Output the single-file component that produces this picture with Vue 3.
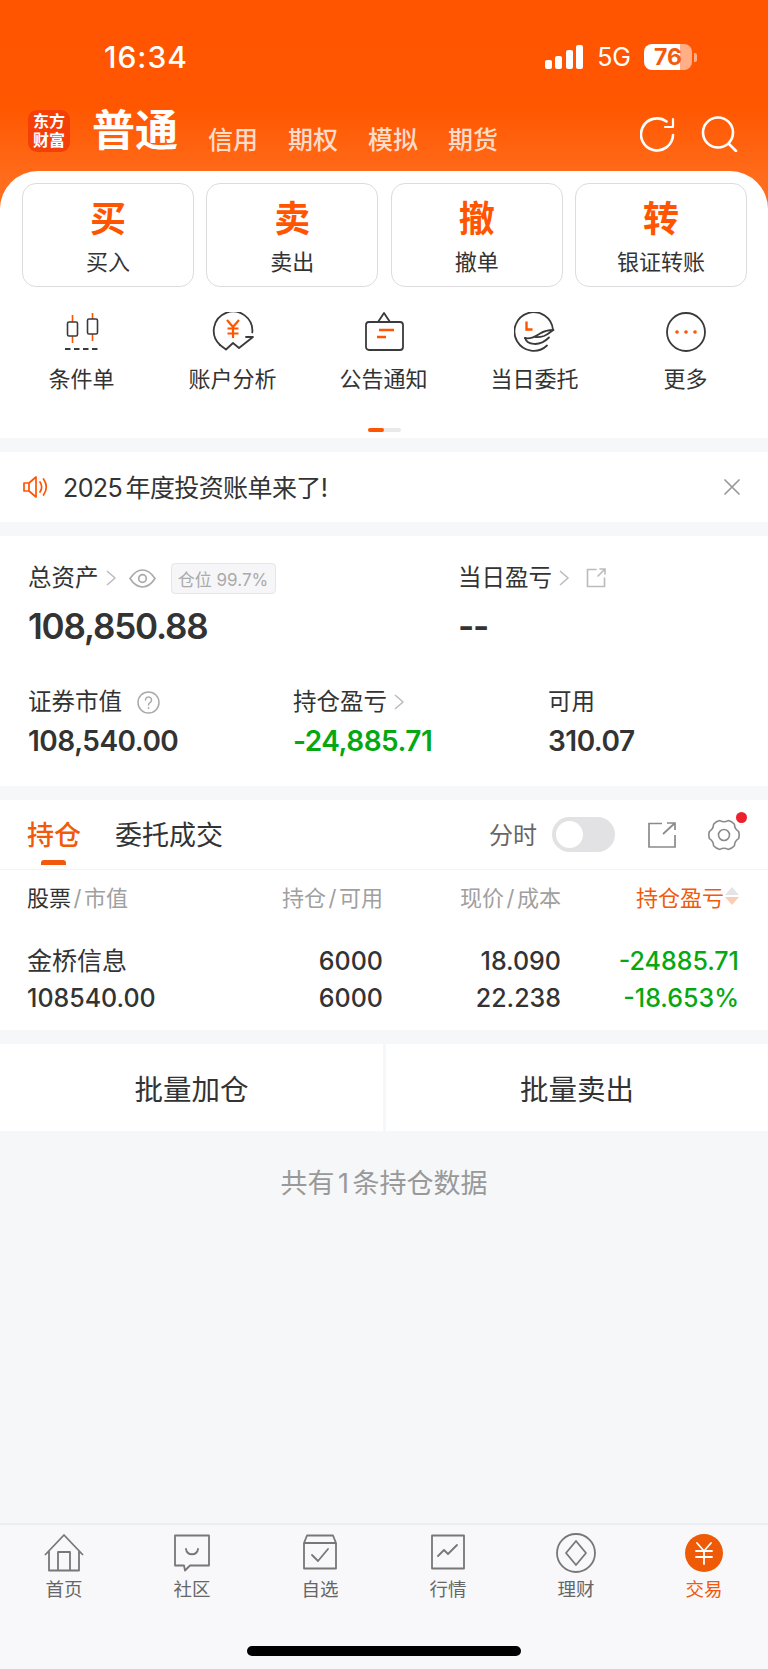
<template>
  <div class="page">
    <header class="head">
      <div class="status">
        <span class="time">16:34</span>
        <div class="status-right">
          <div class="signal"><i></i><i></i><i></i><i></i></div>
          <span class="net">5G</span>
          <div class="battery"><span class="battery-num">76</span></div>
          <i class="battery-tip"></i>
        </div>
      </div>
      <div class="nav">
        <div class="logo">东方<br />财富</div>
        <span class="nav-main">普通</span>
        <div class="nav-tabs">
          <span v-for="t in navTabs" :key="t">{{ t }}</span>
        </div>
        <div class="nav-icons">
          <svg width="36" height="36" viewBox="0 0 36 36" fill="none" stroke="#fff" stroke-width="2.6" stroke-linecap="round" stroke-linejoin="round">
            <path d="M33 19a16 16 0 1 1-6.5-13.5" />
            <path d="M33 3v8h-8" stroke-width="2.2" />
          </svg>
          <svg width="37" height="36" viewBox="0 0 37 36" fill="none" stroke="#fff" stroke-width="2.6" stroke-linecap="round">
            <circle cx="17" cy="16.5" r="15" />
            <path d="M28 28l7 7" />
          </svg>
        </div>
      </div>
    </header>

    <section class="card quick">
      <div class="trade-row">
        <div v-for="b in tradeBtns" :key="b.big" class="trade-btn">
          <span class="trade-big">{{ b.big }}</span>
          <span class="trade-sub">{{ b.sub }}</span>
        </div>
      </div>
      <div class="tool-row">
        <div class="tool">
          <svg width="40" height="40" viewBox="0 0 40 40" fill="none" stroke-width="1.6">
            <path d="M10.500 3v7M10.500 24v7M30.500 1v6M30.500 22v7" stroke="#ff5500" />
            <rect x="5.500" y="10" width="10" height="14" rx="1.500" stroke="#3a3a3a" />
            <rect x="25.500" y="7" width="10" height="15" rx="1.500" stroke="#3a3a3a" />
            <path d="M3 37h36" stroke="#3a3a3a" stroke-width="1.800" stroke-dasharray="5.500 3.500" />
          </svg>
          <span>条件单</span>
        </div>
        <div class="tool">
          <svg width="42" height="40" viewBox="0 0 42 40" fill="none" stroke="#3a3a3a" stroke-width="1.800" stroke-linejoin="round" stroke-linecap="round">
            <path d="M8 33A19.300 19.300 0 1 1 40.300 20.500" />
            <path d="M8 33l6 4.500 7-6.500 6 5 14-11h-7" />
            <path d="M15 8l6 7 6-7M21 15v11M15.500 16.500h11M15.500 21.500h11" stroke="#ff5500" stroke-width="2.200" stroke-linecap="butt" />
          </svg>
          <span>账户分析</span>
        </div>
        <div class="tool">
          <svg width="40" height="40" viewBox="0 0 40 40" fill="none" stroke="#3a3a3a" stroke-width="1.800" stroke-linejoin="round">
            <path d="M14 10l6-9 6 9" />
            <rect x="2" y="10" width="37" height="28" rx="3" />
            <path d="M15 18h15M13 25h9" stroke="#ff5500" stroke-width="2.400" />
          </svg>
          <span>公告通知</span>
        </div>
        <div class="tool">
          <svg width="42" height="40" viewBox="0 0 42 40" fill="none" stroke="#3a3a3a" stroke-width="1.800" stroke-linecap="round" stroke-linejoin="round">
            <path d="M39 18A19.300 19.300 0 1 0 33 33.500" />
            <path d="M12.500 9.500v8h6" stroke="#ff5500" stroke-width="2.400" stroke-linecap="butt" stroke-linejoin="miter" />
            <path d="M11 26c7 1.500 11-2 15-4.500 4-2.500 9-3.500 13.500-3.500-3.500 2-5.500 4.500-9.500 6-3 1-6 1.500-9 1" />
            <path d="M11 26c2 6.500 14 9.500 24-.5" />
          </svg>
          <span>当日委托</span>
        </div>
        <div class="tool">
          <svg width="40" height="40" viewBox="0 0 40 40" fill="none" stroke="#3a3a3a" stroke-width="1.800">
            <circle cx="20" cy="20" r="19" />
            <circle cx="11" cy="20" r="1.800" fill="#ff5500" stroke="none" />
            <circle cx="20" cy="20" r="1.800" fill="#ff5500" stroke="none" />
            <circle cx="29" cy="20" r="1.800" fill="#ff5500" stroke="none" />
          </svg>
          <span>更多</span>
        </div>
      </div>
      <div class="pager"><i></i></div>
    </section>

    <section class="card notice">
      <svg width="25" height="22" viewBox="0 0 25 22" fill="none" stroke="#ff5500" stroke-width="1.700" stroke-linejoin="round">
        <path d="M1 7h5l7-6v20l-7-6H1zM6 7v8" />
        <path d="M17 6c2 3 2 7 0 10M20.500 3c3.500 5 3.500 11 0 16" stroke-linecap="round" />
      </svg>
      <span class="notice-text">2025 年度投资账单来了!</span>
      <svg width="16" height="16" viewBox="0 0 16 16" stroke="#999" stroke-width="1.700" stroke-linecap="round">
        <path d="M1 1l14 14M15 1L1 15" />
      </svg>
    </section>

    <section class="card assets">
      <div class="assets-top">
        <div>
          <div class="label-line">
            <span class="label">总资产</span>
            <svg class="chevron" width="11" height="16" viewBox="0 0 11 16" fill="none" stroke="#bbb" stroke-width="1.500"><path d="M1 1l8 7-8 7" /></svg>
            <svg class="eye" width="27" height="19" viewBox="0 0 27 19" fill="none" stroke="#aaa" stroke-width="1.700">
              <path d="M1 9.500C5 3.500 9 1 13.500 1S22 3.500 26 9.500C22 15.500 18 18 13.500 18S5 15.500 1 9.500z" />
              <circle cx="13.500" cy="9.500" r="3.800" />
            </svg>
            <span class="tag">仓位 99.7%</span>
          </div>
          <div class="value-big">108,850.88</div>
        </div>
        <div>
          <div class="label-line">
            <span class="label">当日盈亏</span>
            <svg class="chevron" width="11" height="16" viewBox="0 0 11 16" fill="none" stroke="#bbb" stroke-width="1.500"><path d="M1 1l8 7-8 7" /></svg>
            <svg class="share-small" width="20" height="20" viewBox="0 0 20 20" fill="none" stroke="#bbb" stroke-width="1.600" stroke-linecap="round">
              <path d="M10 1.500H1.500v17h17V10M12 8l7-7M14 1h5v5" />
            </svg>
          </div>
          <div class="value-big">--</div>
        </div>
      </div>
      <div class="assets-bottom">
        <div>
          <div class="label-line">
            <span class="label">证券市值</span>
            <svg class="help" width="23" height="23" viewBox="0 0 23 23" fill="none" stroke="#aaa" stroke-width="1.500">
              <circle cx="11.500" cy="11.500" r="10.500" />
              <path d="M8.500 9a3 3 0 1 1 4.500 2.600c-1 .6-1.500 1.200-1.500 2.400" stroke-linecap="round" />
              <circle cx="11.500" cy="17" r=".9" fill="#aaa" stroke="none" />
            </svg>
          </div>
          <div class="value">108,540.00</div>
        </div>
        <div>
          <div class="label-line">
            <span class="label">持仓盈亏</span>
            <svg class="chevron" width="11" height="16" viewBox="0 0 11 16" fill="none" stroke="#bbb" stroke-width="1.500"><path d="M1 1l8 7-8 7" /></svg>
          </div>
          <div class="value green">-24,885.71</div>
        </div>
        <div>
          <div class="label-line"><span class="label">可用</span></div>
          <div class="value">310.07</div>
        </div>
      </div>
    </section>

    <section class="card holdings">
      <div class="tabs">
        <span class="tab active">持仓</span>
        <span class="tab">委托成交</span>
        <span class="tab-spacer"></span>
        <span class="tab-switch-label">分时</span>
        <div class="toggle"><i></i></div>
        <svg class="tab-share" width="28" height="26" viewBox="0 0 28 26" fill="none" stroke="#8a8a8a" stroke-width="1.700">
          <path d="M14 1.500H1v23.500h26V13M15 12L27 1M19 1h8v7" />
        </svg>
        <div class="gear">
          <svg width="32" height="32" viewBox="0 0 32 32" fill="none" stroke="#8a8a8a" stroke-width="1.600" stroke-linejoin="round">
            <path :d="gearPath" />
            <circle cx="16" cy="16" r="5.500" />
          </svg>
          <i class="dot"></i>
        </div>
      </div>
      <div class="table-head">
        <span><b>股票</b><em>/</em>市值</span>
        <span class="right">持仓<em>/</em>可用</span>
        <span class="right">现价<em>/</em>成本</span>
        <span class="right sort">持仓盈亏<i class="sort-icon"></i></span>
      </div>
      <div class="table-row">
        <span class="stock-name">金桥信息</span>
        <span class="right">6000</span>
        <span class="right">18.090</span>
        <span class="right green">-24885.71</span>
        <span>108540.00</span>
        <span class="right">6000</span>
        <span class="right">22.238</span>
        <span class="right green">-18.653%</span>
      </div>
    </section>

    <div class="batch">
      <button class="batch-btn">批量加仓</button>
      <button class="batch-btn">批量卖出</button>
    </div>

    <p class="count">共有 1 条持仓数据</p>

    <footer class="tabbar">
      <div class="bar-items">
        <div class="bar-item">
          <svg width="40" height="38" viewBox="0 0 40 38" fill="none" stroke="#777" stroke-width="1.800" stroke-linejoin="round">
            <path d="M1 21L20 1l19 20M5 17v19.500h30V17" />
            <path d="M14 36.500V18h12v18.500" />
          </svg>
          <span>首页</span>
        </div>
        <div class="bar-item">
          <svg width="36" height="38" viewBox="0 0 36 38" fill="none" stroke="#777" stroke-width="1.800" stroke-linejoin="round">
            <path d="M1 1.500h34v30H16l-5 5-1-5H1z" />
            <path d="M12 15c1 7 11 7 12 0" stroke-linecap="round" />
          </svg>
          <span>社区</span>
        </div>
        <div class="bar-item">
          <svg width="36" height="38" viewBox="0 0 36 38" fill="none" stroke="#777" stroke-width="1.800" stroke-linejoin="round">
            <path d="M2 9L5 1.500h26L34 9v25.500H2zM2 9h32" />
            <path d="M10 21l6 6 10-12" stroke-linecap="round" />
          </svg>
          <span>自选</span>
        </div>
        <div class="bar-item">
          <svg width="34" height="38" viewBox="0 0 34 38" fill="none" stroke="#777" stroke-width="1.800" stroke-linejoin="round">
            <rect x="1" y="1.500" width="32" height="33" />
            <path d="M7 22l6-6 4 4 9-9" stroke-linecap="round" />
          </svg>
          <span>行情</span>
        </div>
        <div class="bar-item">
          <svg width="40" height="40" viewBox="0 0 40 40" fill="none" stroke="#777" stroke-width="1.800" stroke-linejoin="round">
            <circle cx="20" cy="20" r="19" />
            <path d="M20 8l10 12-10 12-10-12z" />
          </svg>
          <span>理财</span>
        </div>
        <div class="bar-item on">
          <svg width="38" height="38" viewBox="0 0 38 38" fill="none" stroke="#fff" stroke-width="1.800" stroke-linecap="round">
            <circle cx="19" cy="19" r="19" fill="#ee5a05" stroke="none" />
            <path d="M12 9l7 8 7-8M19 17v13M11 17h16M11 23h16" />
          </svg>
          <span>交易</span>
        </div>
      </div>
      <div class="home-line"></div>
    </footer>
  </div>
</template>

<script setup>
const navTabs = ['信用', '期权', '模拟', '期货']

const tradeBtns = [
  { big: '买', sub: '买入' },
  { big: '卖', sub: '卖出' },
  { big: '撤', sub: '撤单' },
  { big: '转', sub: '银证转账' },
]

// six rounded teeth round the centre of a 32 box
const point = (r, deg) => {
  const a = (deg * Math.PI) / 180
  return `${(16 + r * Math.cos(a)).toFixed(2)} ${(16 + r * Math.sin(a)).toFixed(2)}`
}
let d = `M${point(15, -14)}`
for (let k = 0; k < 6; k++) {
  const c = k * 60
  d += ` Q${point(15.8, c)} ${point(15, c + 14)}`
  d += ` Q${point(12.2, c + 30)} ${point(15, c + 46)}`
}
const gearPath = d + 'Z'
</script>

<style>
body {
  margin: 0;
  background: #f6f7f9;
}
</style>

<style scoped>
.page {
  width: 768px;
  height: 1669px;
  display: flex;
  flex-direction: column;
  overflow: hidden;
  background: #f6f7f9;
  color: #333;
  font-family: Inter, "Noto Sans CJK SC", sans-serif;
}

.head {
  height: 210px;
  box-sizing: border-box;
  padding-top: 40px;
  background: linear-gradient(180deg, #ff5500 0%, #ff5600 50%, #ff6c1b 85%, #ff6c1b 100%);
  color: #fff;
}

.status {
  height: 34px;
  display: flex;
  align-items: center;
  justify-content: space-between;
  padding: 0 71px 0 104px;
}

.time {
  font-size: 30px;
  font-weight: 500;
  letter-spacing: 1px;
}

.status-right {
  display: flex;
  align-items: center;
}

.signal {
  display: flex;
  align-items: flex-end;
  gap: 3.500px;
  height: 24px;
  margin-right: 14px;
}

.signal i {
  width: 7px;
  background: #fff;
  border-radius: 2px;
}

.signal i:nth-child(1) { height: 9px; }
.signal i:nth-child(2) { height: 13px; }
.signal i:nth-child(3) { height: 19px; }
.signal i:nth-child(4) { height: 24px; }

.net {
  font-size: 25px;
  font-weight: 400;
  margin-right: 13px;
}

.battery {
  width: 48px;
  height: 26px;
  border-radius: 8px;
  background: linear-gradient(90deg, #fff 0, #fff 76%, #ffae85 76%, #ffae85 100%);
  display: flex;
  align-items: center;
  justify-content: center;
}

.battery-num {
  font-size: 23px;
  font-weight: 700;
  color: #f25a10;
}

.battery-tip {
  width: 3px;
  height: 9px;
  margin-left: 2px;
  border-radius: 0 2px 2px 0;
  background: #ffae85;
}

.nav {
  display: flex;
  align-items: flex-end;
  height: 42px;
  margin-top: 36px;
  padding: 0 30px 0 28px;
}

.logo {
  width: 42px;
  height: 42px;
  border-radius: 9px;
  background: #f53f08;
  text-align: center;
  padding-top: 1.500px;
  box-sizing: border-box;
  font-size: 16px;
  font-weight: 700;
  line-height: 19.500px;
}

.nav-main {
  margin-left: 22px;
  font-size: 43px;
  font-weight: 700;
  line-height: 44px;
}

.nav-tabs {
  display: flex;
  gap: 30px;
  margin-left: 30px;
  color: rgba(255, 255, 255, 0.78);
  font-size: 25px;
  font-weight: 500;
  line-height: 30px;
  margin-bottom: -3px;
}

.nav-icons {
  margin-left: auto;
  display: flex;
  gap: 25px;
}

.card {
  background: #fff;
}

.quick {
  height: 267px;
  margin-top: -39px;
  border-radius: 38px 38px 0 0;
  box-sizing: border-box;
  padding-top: 12px;
  position: relative;
}

.trade-row {
  display: grid;
  grid-template-columns: repeat(4, 172px);
  justify-content: space-between;
  padding: 0 21px 0 22px;
}

.trade-btn {
  height: 104px;
  box-sizing: border-box;
  border: 1.500px solid #dcdcdc;
  border-radius: 14px;
  display: flex;
  flex-direction: column;
  align-items: center;
}

.trade-big {
  margin-top: 13px;
  color: #ff5500;
  font-size: 36px;
  font-weight: 700;
  line-height: 44px;
}

.trade-sub {
  margin-top: 8px;
  font-size: 22px;
  line-height: 26px;
}

.tool-row {
  display: grid;
  grid-template-columns: repeat(5, 151px);
  padding: 25px 6px 0 6px;
}

.tool {
  display: flex;
  flex-direction: column;
  align-items: center;
  font-size: 22px;
  line-height: 28px;
}

.tool span {
  margin-top: 13px;
}

.pager {
  position: absolute;
  left: 368px;
  top: 257px;
  width: 33px;
  height: 4px;
  border-radius: 2px;
  background: #e9e9e9;
}

.pager i {
  display: block;
  width: 16px;
  height: 4px;
  border-radius: 2px;
  background: #ff5500;
}

.notice {
  height: 70px;
  margin-top: 14px;
  display: flex;
  align-items: center;
  padding: 0 28px 0 23px;
}

.notice-text {
  margin-left: 15px;
  margin-top: -2px;
  flex: 1;
  font-size: 25px;
  letter-spacing: -0.6px;
  word-spacing: -3px;
}

.assets {
  height: 250px;
  margin-top: 14px;
  box-sizing: border-box;
  padding: 26px 0 0 28px;
}

.assets-top {
  display: grid;
  grid-template-columns: 430px 1fr;
}

.assets-bottom {
  display: grid;
  grid-template-columns: 265px 255px 1fr;
  margin-top: 39px;
}

.label-line {
  display: flex;
  align-items: center;
  height: 32px;
}

.label {
  font-size: 23.500px;
  line-height: 32px;
}

.chevron {
  margin-left: 7px;
}

.eye {
  margin-left: 12px;
}

.tag {
  margin-left: 15px;
  height: 31px;
  width: 105px;
  box-sizing: border-box;
  display: flex;
  align-items: center;
  justify-content: center;
  white-space: nowrap;
  border: 1px solid #e6e6e8;
  border-radius: 4px;
  background: #f6f6f8;
  color: #aaa;
  font-size: 17px;
}

.share-small {
  margin-left: 16px;
}

.help {
  margin-left: 15px;
}

.value-big {
  margin-top: 11px;
  font-size: 35px;
  font-weight: 600;
  letter-spacing: -1.200px;
  line-height: 42px;
}

.value {
  margin-top: 6px;
  font-size: 28px;
  font-weight: 600;
  letter-spacing: -0.5px;
  line-height: 34px;
}

.green {
  color: #06a812;
}

.holdings {
  height: 230px;
  margin-top: 14px;
}

.tabs {
  height: 70px;
  box-sizing: border-box;
  border-bottom: 1px solid #f3f3f3;
  display: flex;
  align-items: center;
  padding: 0 28px 0 27px;
  font-size: 27px;
}

.tab {
  position: relative;
  margin-top: -2px;
  margin-right: 34px;
  font-weight: 400;
}

.tab.active {
  color: #f05a0a;
  font-weight: 500;
}

.tab.active::after {
  content: "";
  position: absolute;
  left: 14px;
  bottom: -12px;
  width: 25px;
  height: 5px;
  border-radius: 3px 3px 0 0;
  background: #f05a0a;
}

.tab-spacer {
  flex: 1;
}

.tab-switch-label {
  color: #666;
  font-size: 24px;
  margin-top: -2px;
}

.toggle {
  width: 63px;
  height: 35px;
  margin-left: 15px;
  border-radius: 18px;
  background: #e2e2e4;
  display: flex;
  align-items: center;
  padding-left: 4px;
  box-sizing: border-box;
}

.toggle i {
  width: 27px;
  height: 27px;
  border-radius: 50%;
  background: #fff;
}

.tab-share {
  margin-left: 33px;
}

.gear {
  position: relative;
  margin-left: 32px;
  height: 32px;
}

.dot {
  position: absolute;
  top: -7px;
  right: -7px;
  width: 11px;
  height: 11px;
  border-radius: 50%;
  background: #f0202a;
}

.table-head {
  display: grid;
  grid-template-columns: repeat(4, 1fr);
  align-items: center;
  height: 52px;
  padding: 0 29px 0 27px;
  color: #a0a0a0;
  font-size: 22px;
}

.table-head b {
  color: #333;
  font-weight: 400;
}

.table-head em {
  margin: 0 2.500px;
  font-style: normal;
}

.right {
  text-align: right;
}

.sort {
  color: #f05a0a;
  padding-right: 15px;
  position: relative;
}

.sort-icon {
  position: absolute;
  right: 0;
  top: 50%;
  margin-top: -9px;
  width: 0;
  height: 0;
  border-left: 7px solid transparent;
  border-right: 7px solid transparent;
  border-bottom: 8px solid #e4e4e4;
}

.sort-icon::after {
  content: "";
  position: absolute;
  left: -7px;
  top: 10px;
  width: 0;
  height: 0;
  border-left: 7px solid transparent;
  border-right: 7px solid transparent;
  border-top: 8px solid #fbcdb4;
}

.table-row {
  display: grid;
  grid-template-columns: repeat(4, 1fr);
  grid-auto-rows: 37px;
  align-items: center;
  padding: 20px 29px 0 27px;
  font-size: 25px;
  font-weight: 500;
}

.stock-name {
  font-weight: 400;
  margin-top: -3px;
}

.batch {
  height: 87px;
  margin-top: 14px;
  display: grid;
  grid-template-columns: 383px 1fr;
  gap: 3px;
}

.batch-btn {
  border: 0;
  padding: 0;
  background: #fff;
  color: #333;
  font: inherit;
  font-size: 28.500px;
}

.count {
  margin: 36px 0 0;
  text-align: center;
  color: #999;
  font-size: 27px;
  line-height: 34px;
  word-spacing: -4px;
}

.tabbar {
  margin-top: auto;
  height: 146px;
  box-sizing: border-box;
  border-top: 2px solid #ecedf1;
  background: #f8f8fb;
}

.bar-items {
  display: grid;
  grid-template-columns: repeat(6, 128px);
  padding-top: 8px;
}

.bar-item {
  display: flex;
  flex-direction: column;
  align-items: center;
  color: #666;
  font-size: 18.500px;
  line-height: 22px;
}

.bar-item svg {
  height: 40px;
}

.bar-item span {
  margin-top: 5px;
}

.bar-item.on {
  color: #f05a0a;
}

.home-line {
  width: 274px;
  height: 10px;
  margin: 46px auto 0;
  border-radius: 5px;
  background: #000;
}
</style>
